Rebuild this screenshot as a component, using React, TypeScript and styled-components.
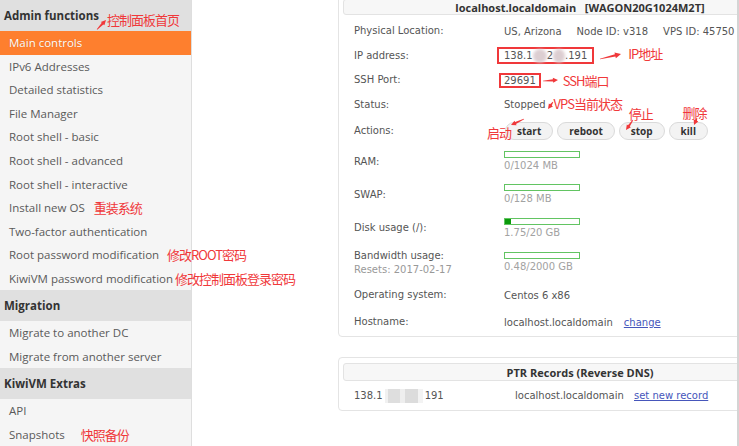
import React from "react";
import styled, { createGlobalStyle } from "styled-components";

const RED = "#f0383a";

const GlobalStyle = createGlobalStyle`
  html, body { margin: 0; padding: 0; background: #fff; overflow: hidden; }
  body { font-family: "DejaVu Sans", Verdana, sans-serif; }
  * { box-sizing: border-box; }
`;

const Page = styled.div`
  display: flex;
  width: 739px;
  height: 446px;
  overflow: hidden;
  background: #fff;
`;

/* ---------- Sidebar ---------- */

const Sidebar = styled.nav`
  flex: none;
  width: 192px;
  height: 100%;
  background: #f5f5f5;
  border-right: 1px solid #dedede;
  display: flex;
  flex-direction: column;
  font-family: "Open Sans", "Noto Sans", sans-serif;
  position: relative;
  z-index: 2;
`;

const SectionHeader = styled.div`
  position: relative;
  flex: none;
  height: 31px;
  display: flex;
  align-items: center;
  padding-left: 4px;
  background: #e0e0e0;
  font-weight: 700;
  font-size: 11.5px;
  color: #333;
  white-space: nowrap;
`;

const NavItem = styled.div<{ $active?: boolean }>`
  flex: none;
  height: 23.55px;
  display: flex;
  align-items: center;
  padding-left: 9px;
  font-size: 11.5px;
  white-space: nowrap;
  color: ${(p) => (p.$active ? "#fff" : "#5a5a5a")};
  background: ${(p) => (p.$active ? "#fe7f2e" : "transparent")};
  text-shadow: ${(p) => (p.$active ? "0 0 1px rgba(120,50,0,0.35)" : "none")};
`;

const Note = styled.span<{ $gap?: number; $lift?: number }>`
  margin-left: ${(p) => p.$gap ?? 0}px;
  color: ${RED};
  font-family: "Noto Sans CJK SC", sans-serif;
  font-size: 13px;
  letter-spacing: -1px;
  line-height: 13px;
  white-space: nowrap;
  transform: translateY(${(p) => -(p.$lift ?? 0)}px);
`;

const Callout = styled.span<{ $left: number; $top: number }>`
  position: absolute;
  left: ${(p) => p.$left}px;
  top: ${(p) => p.$top}px;
  display: block;
  color: ${RED};
  font-family: "Noto Sans CJK SC", sans-serif;
  font-weight: 400;
  font-size: 13px;
  letter-spacing: -1px;
  line-height: 13px;
  white-space: nowrap;
  pointer-events: none;
  z-index: 3;
`;

const ArrowSvg = styled.svg`
  display: block;
  flex: none;
  overflow: visible;
`;

type ArrowProps = {
  w: number;
  h: number;
  x1: number;
  y1: number;
  x2: number;
  y2: number;
  head?: number;
};

const Arrow = ({ w, h, x1, y1, x2, y2, head = 6 }: ArrowProps) => {
  const a = Math.atan2(y2 - y1, x2 - x1);
  const cos = Math.cos(a);
  const sin = Math.sin(a);
  const bx = x2 - head * cos;
  const by = y2 - head * sin;
  const nx = -sin;
  const ny = cos;
  const hw = head * 0.5;
  const sw = 1.1;
  const pts = [
    [x1 + nx * 0.3, y1 + ny * 0.3],
    [bx + nx * sw, by + ny * sw],
    [bx + nx * hw, by + ny * hw],
    [x2, y2],
    [bx - nx * hw, by - ny * hw],
    [bx - nx * sw, by - ny * sw],
    [x1 - nx * 0.3, y1 - ny * 0.3],
  ];
  return (
    <ArrowSvg width={w} height={h} viewBox={`0 0 ${w} ${h}`}>
      <polygon
        points={pts.map((p) => `${p[0].toFixed(2)},${p[1].toFixed(2)}`).join(" ")}
        fill={RED}
      />
    </ArrowSvg>
  );
};

/* ---------- Main ---------- */

const Main = styled.main`
  flex: 1;
  min-width: 0;
  height: 100%;
  overflow: hidden;
  border-right: 2px solid #d4d4d4;
  padding-left: 146px;
  display: flex;
  flex-direction: column;
  align-items: flex-start;
  gap: 20px;
  font-family: "DejaVu Sans", Verdana, sans-serif;
  font-size: 10px;
  color: #555;
`;

const Card = styled.section<{ $offset?: number }>`
  flex: none;
  width: 484px;
  margin-top: ${(p) => p.$offset ?? 0}px;
  border: 1px solid #e4e4e4;
  border-radius: 4px;
  padding: 5px 4px 0;
  background: #fff;
`;

const CardTitle = styled.div<{ $h: number }>`
  height: ${(p) => p.$h}px;
  display: flex;
  align-items: center;
  justify-content: center;
  background: #f7f7f7;
  border: 1px solid #e3e3e3;
  border-radius: 3px;
  font-family: "Open Sans", "Noto Sans", sans-serif;
  font-weight: 700;
  font-size: 11px;
  color: #333;
  white-space: pre;
`;

const InfoList = styled.div`
  display: flex;
  flex-direction: column;
  padding: 4px 0 2px 11px;
`;

const Row = styled.div<{ $h: number }>`
  height: ${(p) => p.$h}px;
  display: grid;
  grid-template-columns: 150px auto;
  align-items: center;
  white-space: nowrap;
`;

const Label = styled.div`
  color: #555;
  line-height: 14px;
`;

const SubLabel = styled.div`
  color: #999;
`;

const Value = styled.div<{ $gap?: number }>`
  display: flex;
  align-items: center;
  gap: ${(p) => p.$gap ?? 0}px;
  color: #555;
`;

const Highlight = styled.span<{ $h: number; $shift: number; $pad: number }>`
  display: inline-flex;
  align-items: center;
  height: ${(p) => p.$h}px;
  margin-left: ${(p) => -p.$shift}px;
  padding: 0 ${(p) => p.$pad}px;
  border: 2px solid ${RED};
`;

const Blur = styled.span<{ $w: number }>`
  display: inline-block;
  width: ${(p) => p.$w}px;
  height: 14px;
  border-radius: 50%;
  background: #d9c9cd;
  filter: blur(1.6px);
  opacity: 0.9;
`;

const Masked = styled.span`
  display: inline-block;
  width: 38px;
  height: 14px;
  margin: 0 2px;
  background: linear-gradient(
    90deg,
    #f1f1f1 0 8%,
    #dedede 8% 40%,
    #eeeeee 40% 53%,
    #dcdcdc 53% 86%,
    #f3f3f3 86% 100%
  );
  filter: blur(0.6px);
`;

const Actions = styled.div`
  display: flex;
  align-items: center;
  gap: 4px;
  margin-left: 1px;
`;

const ActionButton = styled.button`
  position: relative;
  height: 18px;
  padding: 0 11px;
  border: 1px solid #dadada;
  border-radius: 9px;
  background: #f3f3f3;
  font-family: "Open Sans", "Noto Sans", sans-serif;
  font-weight: 700;
  font-size: 10px;
  color: #333;
  line-height: 16px;
  cursor: pointer;
`;

const Meter = styled.div`
  display: flex;
  flex-direction: column;
  gap: 2px;
`;

const Bar = styled.div`
  width: 76px;
  height: 7px;
  border: 1px solid #62c462;
  background: #fff;
  display: flex;
`;

const BarFill = styled.div`
  height: 100%;
  background: #0b9a0b;
`;

const MeterText = styled.div`
  color: #a2a2a2;
  line-height: 12px;
`;

const Link = styled.a<{ $gap?: number }>`
  margin-left: ${(p) => p.$gap ?? 0}px;
  color: #4656bb;
  text-decoration: underline;
  cursor: pointer;
`;

const PtrRow = styled.div`
  height: 29px;
  display: grid;
  grid-template-columns: 161px 119px auto;
  align-items: center;
  padding-left: 11px;
  white-space: nowrap;
`;

const IpCell = styled.div`
  display: flex;
  align-items: center;
`;

type MeterProps = { used: number; total: number; unit: string };
const Usage = ({ used, total, unit }: MeterProps) => (
  <Meter>
    <Bar>
      <BarFill style={{ width: `${(used / total) * 100}%` }} />
    </Bar>
    <MeterText>
      {used}/{total} {unit}
    </MeterText>
  </Meter>
);

export default function App() {
  return (
    <>
      <GlobalStyle />
      <Page>
        <Sidebar>
          <SectionHeader>
            Admin functions
            <Callout $left={96} $top={19}>
              <Arrow w={11} h={11} x1={1} y1={10.5} x2={10} y2={1} head={5} />
            </Callout>
            <Callout $left={107} $top={13}>控制面板首页</Callout>
          </SectionHeader>
          <NavItem $active>Main controls</NavItem>
          <NavItem>IPv6 Addresses</NavItem>
          <NavItem>Detailed statistics</NavItem>
          <NavItem>File Manager</NavItem>
          <NavItem>Root shell - basic</NavItem>
          <NavItem>Root shell - advanced</NavItem>
          <NavItem>Root shell - interactive</NavItem>
          <NavItem>
            Install new OS<Note $gap={9}>重装系统</Note>
          </NavItem>
          <NavItem>Two-factor authentication</NavItem>
          <NavItem>
            Root password modification<Note $gap={8}>修改ROOT密码</Note>
          </NavItem>
          <NavItem>
            KiwiVM password modification<Note $gap={2}>修改控制面板登录密码</Note>
          </NavItem>
          <SectionHeader>Migration</SectionHeader>
          <NavItem>Migrate to another DC</NavItem>
          <NavItem>Migrate from another server</NavItem>
          <SectionHeader>KiwiVM Extras</SectionHeader>
          <NavItem>API</NavItem>
          <NavItem>
            Snapshots<Note $gap={16}>快照备份</Note>
          </NavItem>
        </Sidebar>

        <Main>
          <Card $offset={-7}>
            <CardTitle $h={16}>{"localhost.localdomain   [WAGON20G1024M2T]"}</CardTitle>
            <InfoList>
              <Row $h={24}>
                <Label>Physical Location:</Label>
                <Value $gap={15}>
                  <span>US, Arizona</span>
                  <span>Node ID: v318</span>
                  <span>VPS ID: 45750</span>
                </Value>
              </Row>
              <Row $h={25}>
                <Label>IP address:</Label>
                <Value>
                  <Highlight $h={17} $shift={7} $pad={5}>
                    138.1<Blur $w={14} />2<Blur $w={12} />.191
                  </Highlight>
                  <Arrow w={27} h={10} x1={6} y1={8} x2={27} y2={3} />
                  <Note $gap={7} $lift={2}>IP地址</Note>
                </Value>
              </Row>
              <Row $h={24}>
                <Label>SSH Port:</Label>
                <Value>
                  <Highlight $h={15} $shift={5} $pad={3}>
                    29691
                  </Highlight>
                  <Arrow w={17} h={8} x1={2} y1={5} x2={17} y2={4} head={5} />
                  <Note $gap={5}>SSH端口</Note>
                </Value>
              </Row>
              <Row $h={25}>
                <Label>Status:</Label>
                <Value>
                  Stopped
                  <Arrow w={8} h={12} x1={7} y1={3} x2={2} y2={10} head={5} />
                  <Note $gap={0} $lift={1}>VPS当前状态</Note>
                </Value>
              </Row>
              <Row $h={28}>
                <Label>Actions:</Label>
                <Actions>
                  <ActionButton>
                    start
                    <Callout $left={-19} $top={3}>启动</Callout>
                    <Callout $left={3} $top={-4}>
                      <Arrow w={16} h={10} x1={15} y1={0} x2={2} y2={6} head={5} />
                    </Callout>
                  </ActionButton>
                  <ActionButton>reboot</ActionButton>
                  <ActionButton>
                    stop
                    <Callout $left={9} $top={-16}>停止</Callout>
                    <Callout $left={4} $top={-3}>
                      <Arrow w={10} h={12} x1={9} y1={0} x2={2} y2={10} head={5} />
                    </Callout>
                  </ActionButton>
                  <ActionButton>
                    kill
                    <Callout $left={13} $top={-17}>删除</Callout>
                    <Callout $left={20} $top={-5}>
                      <Arrow w={8} h={8} x1={7} y1={0} x2={4} y2={7} head={5} />
                    </Callout>
                  </ActionButton>
                </Actions>
              </Row>
              <Row $h={33}>
                <Label>RAM:</Label>
                <Usage used={0} total={1024} unit="MB" />
              </Row>
              <Row $h={33}>
                <Label>SWAP:</Label>
                <Usage used={0} total={128} unit="MB" />
              </Row>
              <Row $h={34}>
                <Label>Disk usage (/):</Label>
                <Usage used={1.75} total={20} unit="GB" />
              </Row>
              <Row $h={35}>
                <Label>
                  Bandwidth usage:
                  <SubLabel>Resets: 2017-02-17</SubLabel>
                </Label>
                <Usage used={0.48} total={2000} unit="GB" />
              </Row>
              <Row $h={30}>
                <Label>Operating system:</Label>
                <Value>Centos 6 x86</Value>
              </Row>
              <Row $h={24}>
                <Label>Hostname:</Label>
                <Value>
                  localhost.localdomain
                  <Link $gap={11}>change</Link>
                </Value>
              </Row>
            </InfoList>
          </Card>

          <Card>
            <CardTitle $h={18}>PTR Records (Reverse DNS)</CardTitle>
            <PtrRow>
              <IpCell>
                138.1<Masked />191
              </IpCell>
              <span>localhost.localdomain</span>
              <Link>set new record</Link>
            </PtrRow>
          </Card>
        </Main>
      </Page>
    </>
  );
}
